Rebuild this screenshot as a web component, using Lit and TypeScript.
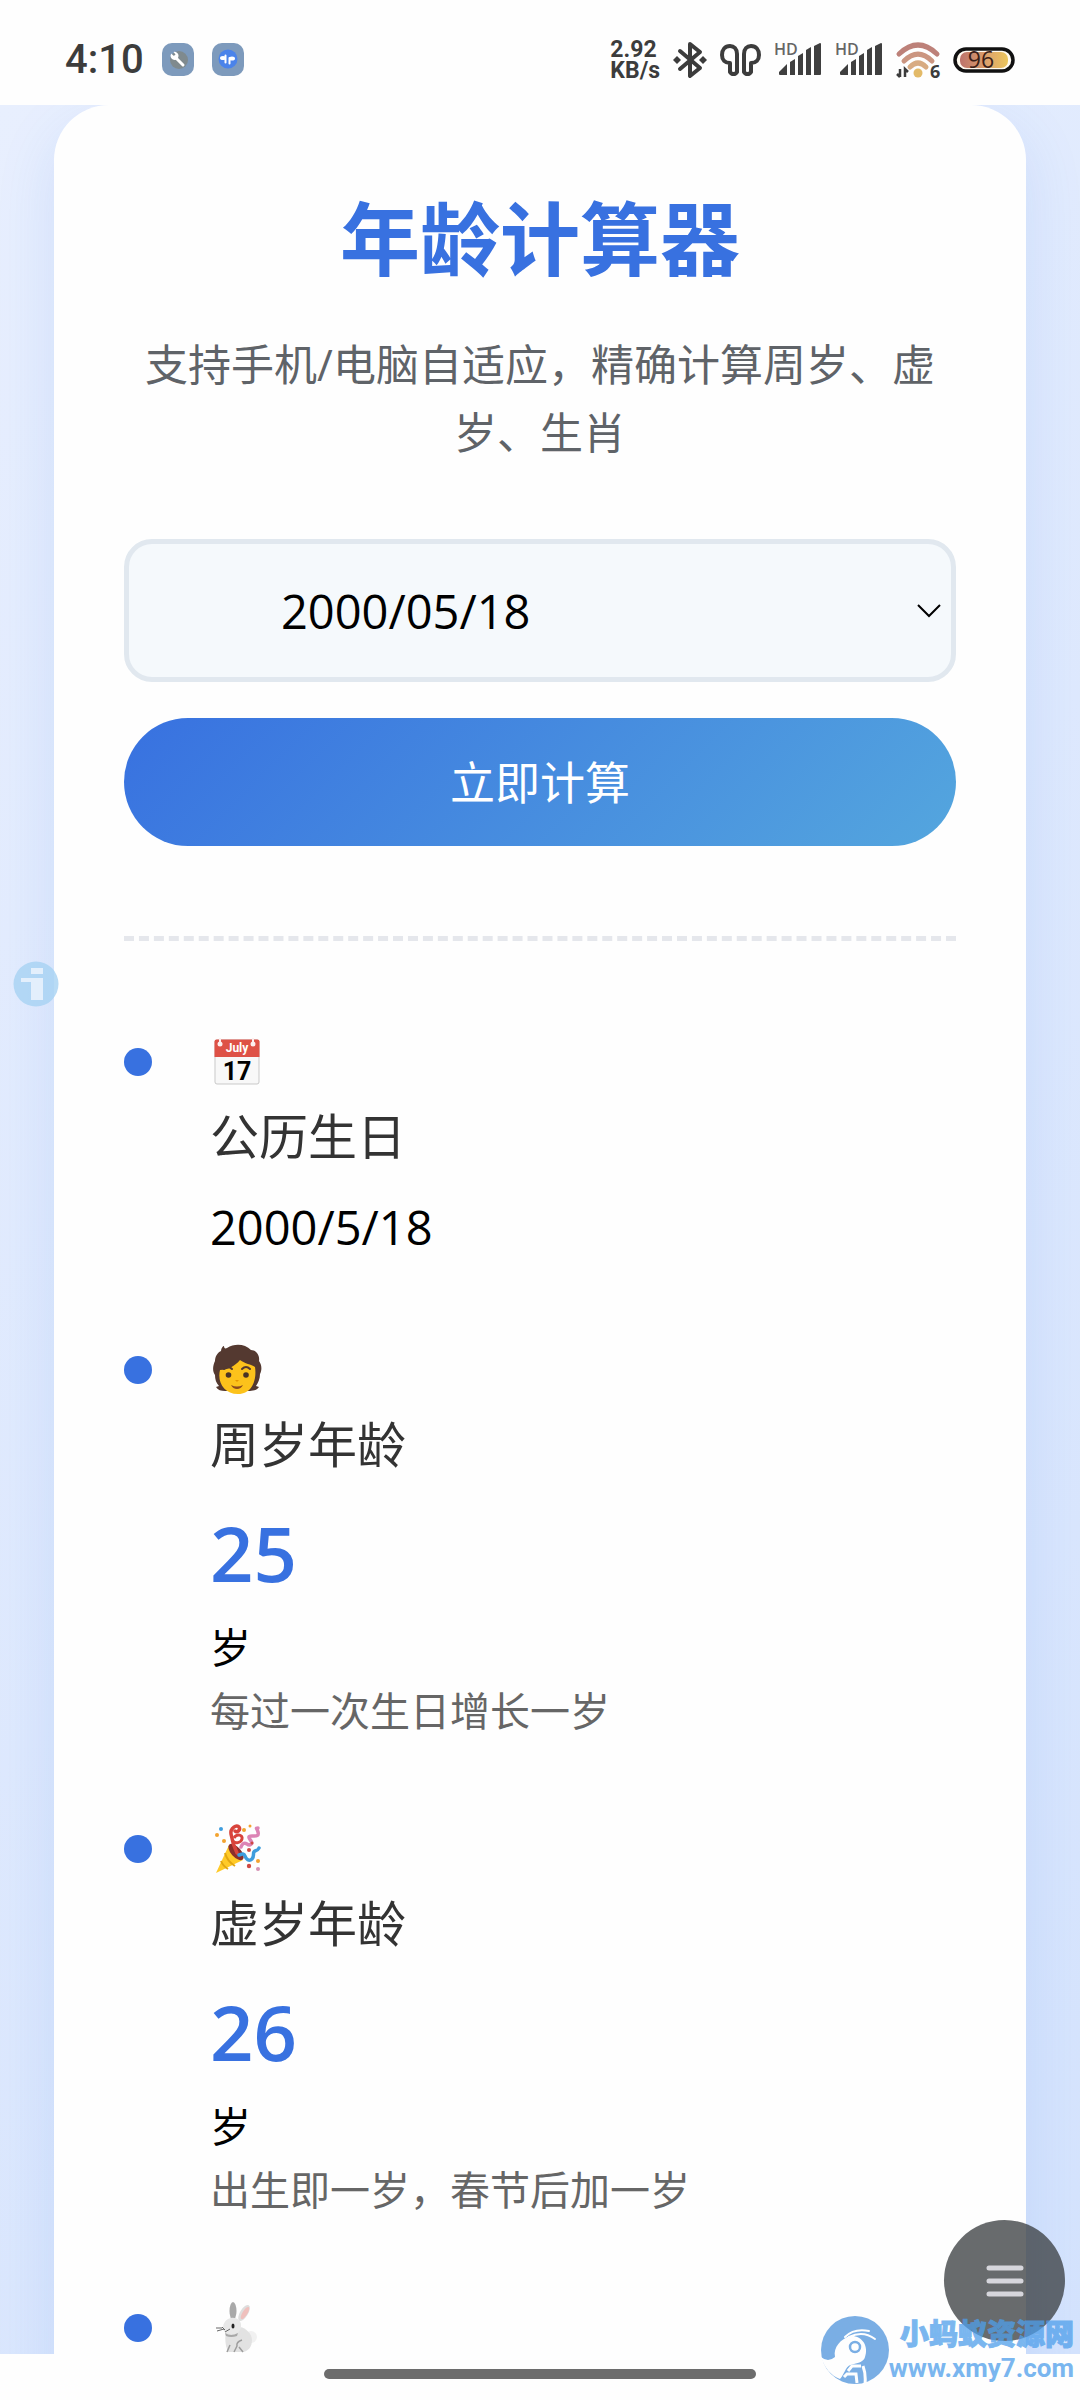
import { LitElement, html, css, svg, nothing } from "lit";
import { customElement, property } from "lit/decorators.js";

type IconName = "calendar" | "person" | "party" | "rabbit";

interface AgeEntry {
  icon: IconName;
  label: string;
  value?: string;
  age?: number;
  note?: string;
}

const ENTRIES: AgeEntry[] = [
  { icon: "calendar", label: "公历生日", value: "2000/5/18" },
  { icon: "person", label: "周岁年龄", age: 25, note: "每过一次生日增长一岁" },
  { icon: "party", label: "虚岁年龄", age: 26, note: "出生即一岁，春节后加一岁" },
  { icon: "rabbit", label: "" },
];

const ICONS = {
  calendar: svg`
    <rect x="5" y="5" width="44" height="44" rx="2" fill="#f8f8f8" stroke="#c9c9c9"/>
    <path d="M4.500 6.500a2 2 0 0 1 2-2h41a2 2 0 0 1 2 2v15.500h-45z" fill="#de5146"/>
    <g fill="#fdeeee"><circle cx="10" cy="9" r="2.500"/><rect x="9" y="3" width="2" height="6"/>
    <circle cx="43" cy="9" r="2.500"/><rect x="42" y="3" width="2" height="6"/></g>
    <text x="27" y="17" text-anchor="middle" font-family="Roboto" font-weight="700" font-size="12" fill="#fff">July</text>
    <text x="27" y="45" text-anchor="middle" font-family="Roboto" font-weight="700" font-size="25" fill="#000">17</text>`,
  person: svg`
    <path d="M11 8c0-3 2-5 3-5 0 2 1 3 3 2 8-5 18-4 24 2 5 0 9 5 8 11 3 4 3 9 1 13 0 5-2 9-4 12l3 1c-2 3-6 4-9 4H15c-4 0-7-1-9-4l3-1c-3-3-4-7-4-11-3-4-2-10 0-14 0-4 2-8 6-10z" fill="#543930"/>
    <path d="M30 17c5 4 11 4 15 7 2 13-3 27-17 27S7 39 10 27c8 0 15-4 20-10z" fill="#fcc21b"/>
    <path d="M14 26q4-4 8 0M32 26q4-4 8 0" fill="none" stroke="#543930" stroke-width="2" stroke-linecap="round"/>
    <circle cx="18.500" cy="32" r="2.800" fill="#4a3425"/><circle cx="36" cy="32" r="2.800" fill="#4a3425"/>
    <path d="M25 37h4l-2 2z" fill="#e59600"/>
    <path d="M21 42q6 3 12 0-2 4-6 4t-6-4z" fill="#8c4a1e"/>`,
  party: svg`
    <path d="M6 51 19 23 33 38z" fill="#ffca28"/>
    <path d="M15 31q2 8 10 13M11 39q2 5 7 8" fill="none" stroke="#e2a610" stroke-width="2"/>
    <ellipse cx="26" cy="30" rx="5" ry="10" transform="rotate(-42 26 30)" fill="#8a2f2b"/>
    <path d="M27 31c-3-6-5-13-6-19-1-6 6-10 8-7s-2 6-4 4" fill="none" stroke="#d8443c" stroke-width="3.500" stroke-linecap="round"/>
    <path d="M24 16c3-5 9-3 8 1s-7 5-9 2" fill="none" stroke="#d8443c" stroke-width="3"/>
    <path d="M31 25c1-3 3-5 6-3s6 0 4-3-4-5 1-5 7 0 6-4-3-4 0-4" fill="none" stroke="#dc84b5" stroke-width="3.500" stroke-linecap="round"/>
    <path d="M29 33c3-1 5-2 6 1s4 6 7 3 0-7 3-8 3-1 4-3" fill="none" stroke="#3f9ddd" stroke-width="3.500" stroke-linecap="round"/>
    <g fill="#f3a32f"><circle cx="7" cy="13" r="2"/><circle cx="14" cy="19" r="2"/><circle cx="34" cy="8" r="2"/><circle cx="40" cy="4" r="1.500"/><circle cx="48" cy="39" r="2"/></g>
    <circle cx="11" cy="7" r="2" fill="#3f9ddd"/>
    <g fill="#cf4a43"><circle cx="42" cy="21" r="1.500"/><circle cx="39" cy="28" r="2"/><circle cx="39" cy="44" r="2.200"/></g>
    <circle cx="48" cy="47" r="2" fill="#d592b4"/>`,
  rabbit: svg`
    <ellipse cx="41" cy="36" rx="6" ry="6" fill="#f1f1f1"/>
    <path d="M16 30c-1 4-1 9 0 15l2 6h15c6-1 9-6 9-12s-6-12-12-13z" fill="#e2e2e2"/>
    <ellipse cx="34" cy="12" rx="4" ry="9" transform="rotate(32 34 12)" fill="#dedede"/>
    <ellipse cx="35" cy="12" rx="2.500" ry="7" transform="rotate(32 35 12)" fill="#efc0bd"/>
    <ellipse cx="23" cy="10" rx="3.500" ry="9" fill="#a9a9a9"/>
    <path d="M21 17c7-1 11 4 10 9-1 6-6 8-11 7-6-1-7-4-7-6 0-5 3-9 8-10z" fill="#e8e8e8"/>
    <path d="M15 32q6 4 13 0l-1 3q-6 2-11 0z" fill="#a8a8a8"/>
    <ellipse cx="23" cy="25" rx="1.500" ry="2.500" fill="#222"/>
    <path d="M6 27h6M7 30l7-2M12 26l3 3M20 28l-5 3" stroke="#666" stroke-width="1"/>
    <path d="M20 44l-3 7M32 39q-6 2-5 6l-3 6M29 46l4 5" fill="none" stroke="#9d9d9d" stroke-width="1.500"/>`,
};

@customElement("status-bar")
class StatusBar extends LitElement {
  static styles = css`
    :host {
      display: flex;
      align-items: center;
      justify-content: space-between;
      box-sizing: border-box;
      height: 105px;
      padding: 14px 65px 0;
      background: #fefefe;
      color: #3c3c3c;
      font-family: Roboto, "Noto Sans CJK SC", sans-serif;
    }
    .group { display: flex; align-items: center; gap: 18px; }
    .system { gap: 13px; }
    .time { font-size: 40px; line-height: 48px; font-weight: 500; }
    .speed { font-size: 23px; line-height: 21px; font-weight: 700; }
    svg { display: block; flex: none; overflow: visible; }
  `;

  private signal() {
    return html`<svg width="48" height="38" viewBox="0 0 48 38" aria-label="HD signal">
      <text x="0" y="14" font-family="Open Sans" font-size="16" font-weight="600" fill="#666">HD</text>
      <g fill="#3f3f3f">
        <path d="M5 31l8-8v11H6q-1 0-1-1z" /><path d="M16 21l5-3v16h-5z" /><path d="M24 15l5-3v22h-5z" />
        <path d="M32 9l5-3v28h-5z" /><path d="M40 5l6-3q1 0 1 1v30q0 1-1 1h-6z" />
      </g>
    </svg>`;
  }

  render() {
    return html`
      <div class="group">
        <span class="time">4:10</span>
        <svg width="32" height="33" viewBox="0 0 32 33">
          <rect width="32" height="33" rx="10" fill="#7d9abc" />
          <circle cx="17" cy="17" r="9" fill="#7f8a8e" />
          <path d="M13 14l8 8" stroke="#fff" stroke-width="3" stroke-linecap="round" />
          <path d="M9 10.500l3 2.500 1.500-1.500-2-2.500a4 4 0 1 1-2.500 2z" fill="#fff" />
        </svg>
        <svg width="32" height="33" viewBox="0 0 32 33">
          <rect width="32" height="33" rx="10" fill="#7d9abc" />
          <circle cx="16" cy="16" r="9.500" fill="#4a83ea" />
          <path d="M13.500 19.500V12.500M17.500 20.500V15" fill="none" stroke="#fff" stroke-width="2" stroke-linecap="round" />
          <ellipse cx="11" cy="15" rx="3" ry="2" fill="#fff" />
          <ellipse cx="20" cy="15.500" rx="3" ry="2" fill="#fff" />
        </svg>
      </div>
      <div class="group system">
        <div class="speed">2.92<br />KB/s</div>
        <svg width="34" height="38" viewBox="0 0 34 38" aria-label="Bluetooth">
          <path d="M7 10l20 17-10 8V3l10 8L7 28" fill="none" stroke="#3c3c3c" stroke-width="4" stroke-linejoin="round" stroke-linecap="round" />
          <path d="M4 15l4 4-4 4-4-4zM30 15l4 4-4 4-4-4z" fill="#3c3c3c" />
        </svg>
        <svg width="41" height="38" viewBox="0 0 41 38" aria-label="Earbuds">
          <g fill="none" stroke="#3c3c3c" stroke-width="4" stroke-linejoin="round">
            <path d="M17 13v18a4 4 0 0 1-7 0V22c-5 0-8-3-8-8 0-5 3-9 8-9 4 0 7 3 7 8z" />
            <path d="M24 13v18a4 4 0 0 0 7 0V22c5 0 8-3 8-8 0-5-3-9-8-9-4 0-7 3-7 8z" />
          </g>
        </svg>
        ${this.signal()} ${this.signal()}
        <svg width="44" height="38" viewBox="0 0 44 38" aria-label="Wi-Fi 6">
          <g fill="none" stroke-width="5" stroke-linecap="round">
            <path d="M3 13Q22-5 41 13" stroke="#bd8179" />
            <path d="M8 20Q22 6 36 20" stroke="#cb9580" />
            <path d="M14 26Q22 18 30 26" stroke="#d8ab82" />
          </g>
          <circle cx="22" cy="32" r="4.500" fill="#e3ba68" />
          <path d="M4 28v8M4 36l-3-3M9 36v-8l3 3" fill="none" stroke="#3c3c3c" stroke-width="2.500" />
          <text x="34" y="37" font-family="Open Sans" font-size="18" font-weight="700" fill="#3c3c3c">6</text>
        </svg>
        <svg width="62" height="38" viewBox="0 0 62 38" aria-label="Battery">
          <defs><linearGradient id="b"><stop offset="0" stop-color="#bd736b" /><stop offset=".6" stop-color="#dfa56b" /><stop offset="1" stop-color="#ecc75c" /></linearGradient></defs>
          <rect x="2" y="8" width="58" height="22" rx="11" fill="#fffaf0" stroke="#111" stroke-width="3.500" />
          <rect x="7" y="11" width="48" height="16" rx="7" fill="url(#b)" />
          <text x="28" y="27" text-anchor="middle" font-family="Open Sans" font-size="23" fill="#3b2018">96</text>
        </svg>
      </div>
    `;
  }
}

@customElement("age-item")
class AgeItem extends LitElement {
  @property({ attribute: false }) entry!: AgeEntry;

  static styles = css`
    :host { display: flex; align-items: flex-start; gap: 58px; }
    .dot { flex: none; width: 28px; height: 28px; margin-top: 24px; border-radius: 50%; background: #3871e0; }
    .body { display: flex; flex-direction: column; min-width: 0; }
    .icon { display: flex; align-items: center; height: 75px; }
    .label { font-size: 49px; line-height: 74px; color: #333; margin: 0 0 14px; font-weight: 400; }
    .value { font-size: 47px; line-height: 80px; }
    .age { font-size: 76px; line-height: 116px; font-weight: 600; color: #3871e0; }
    .unit { font-size: 41px; line-height: 72px; }
    .note { font-size: 40px; line-height: 56px; color: #666; margin: 0 0 7px; }
  `;

  render() {
    const { icon, label, value, age, note } = this.entry;
    return html`
      <span class="dot"></span>
      <div class="body">
        <div class="icon"><svg width="54" height="54" viewBox="0 0 54 54" aria-hidden="true">${ICONS[icon]}</svg></div>
        ${label ? html`<h2 class="label">${label}</h2>` : nothing}
        ${value ? html`<span class="value">${value}</span>` : nothing}
        ${age ? html`<strong class="age">${age}</strong><span class="unit">岁</span>` : nothing}
        ${note ? html`<p class="note">${note}</p>` : nothing}
      </div>
    `;
  }
}

@customElement("site-mark")
class SiteMark extends LitElement {
  static styles = css`
    :host { display: flex; align-items: center; color: #4f9feb; opacity: 0.75; }
    .text { display: flex; flex-direction: column; align-items: flex-end; white-space: nowrap; }
    .name { font-size: 29px; line-height: 36px; font-weight: 900; -webkit-text-stroke: 1px #4f9feb; }
    .url { font-family: Roboto, sans-serif; font-size: 26px; line-height: 32px; font-weight: 700; }
    svg { display: block; flex: none; }
  `;

  render() {
    return html`
      <svg width="68" height="68" viewBox="0 0 68 68" aria-hidden="true">
        <circle cx="34" cy="34" r="34" fill="#4f94dc" />
        <path d="M0 41q7 6 14 0c-2-10 6-18 15-21 12-1 19 10 15 21-1 4-6 6-11 7-9 1-8 8-14 15-9-3-16-12-19-22z" fill="#fff" />
        <path d="M24 21q9-9 24-6M28 21q14-7 26 2" fill="none" stroke="#fff" stroke-width="2" stroke-linecap="round" />
        <circle cx="34" cy="31" r="5" fill="none" stroke="#4f94dc" stroke-width="2.500" />
        <path d="M27 55l4-5h9M42 50q3 8 2 18M23 61l3-3h9l1 9" fill="none" stroke="#fff" stroke-width="3" />
      </svg>
      <div class="text"><span class="name">小蚂蚁资源网</span><span class="url">www.xmy7.com</span></div>
    `;
  }
}

@customElement("app-root")
class AppRoot extends LitElement {
  static styles = css`
    :host {
      position: relative;
      display: flex;
      flex-direction: column;
      height: 100vh;
      overflow: hidden;
      background: #fefefe;
      color: #000;
      font-family: "Open Sans", "Noto Sans CJK SC", sans-serif;
    }
    .page {
      flex: 1;
      min-height: 0;
      overflow: hidden;
      padding: 0 54px;
      background: linear-gradient(135deg, #e8effe, #d4e3fd);
    }
    .card {
      box-sizing: border-box;
      min-height: calc(100% + 120px);
      padding: 76px 70px;
      border-radius: 55px;
      background: #fefefe;
      box-shadow: 0 22px 60px rgba(56, 113, 224, 0.13);
    }
    .title { margin: 0 0 36px; font-size: 80px; line-height: 114px; font-weight: 700; text-align: center; color: #3871e0; }
    .lead { margin: 0 0 72px; font-size: 43px; line-height: 68px; text-align: center; color: #5f6368; }
    .form { display: flex; flex-direction: column; gap: 36px; margin-bottom: 90px; }
    .field { display: grid; align-items: center; }
    .field > * { grid-area: 1 / 1; }
    .field svg { justify-self: end; margin-right: 15px; pointer-events: none; }
    .date {
      appearance: none;
      box-sizing: border-box;
      width: 100%;
      height: 143px;
      padding: 0 60px 0 152px;
      border: 5px solid #e1e8ef;
      border-radius: 28px;
      background: #f5f9fc;
      color: #000;
      font: inherit;
      font-size: 47px;
    }
    .submit {
      height: 128px;
      padding: 0 0 4px;
      border: 0;
      border-radius: 64px;
      background: linear-gradient(135deg, #3871e0, #54a6de);
      color: #fff;
      font: inherit;
      font-size: 45px;
    }
    .results { display: flex; flex-direction: column; gap: 65px; padding-top: 83px; border-top: 5px dashed #e5e7ec; }
    .nav { display: flex; justify-content: center; align-items: center; box-sizing: border-box; height: 46px; padding-bottom: 6px; flex: none; }
    .handle { width: 40%; height: 10px; border-radius: 5px; background: #6c6c6c; }
    .info, .menu { position: absolute; padding: 0; border: 0; background: none; }
    .info { left: 13px; top: 961px; }
    .menu {
      right: 15px;
      bottom: 59px;
      display: flex;
      align-items: center;
      justify-content: center;
      width: 121px;
      height: 121px;
      border-radius: 50%;
      background: rgba(57, 60, 63, 0.76);
    }
    .info svg, .menu svg { display: block; }
    .mark { position: absolute; right: 6px; bottom: 16px; }
  `;

  render() {
    return html`
      <status-bar></status-bar>
      <main class="page">
        <section class="card">
          <h1 class="title">年龄计算器</h1>
          <p class="lead">支持手机/电脑自适应，精确计算周岁、虚岁、生肖</p>
          <form class="form" @submit=${(e: Event) => e.preventDefault()}>
            <label class="field" for="birthday">
              <select class="date" id="birthday" aria-label="公历生日"><option>2000/05/18</option></select>
              <svg width="24" height="16" viewBox="0 0 24 16" aria-hidden="true">
                <path d="M1 2l11 11L23 2" fill="none" stroke="#000" stroke-width="2" />
              </svg>
            </label>
            <button class="submit" type="submit">立即计算</button>
          </form>
          <div class="results">${ENTRIES.map((entry) => html`<age-item .entry=${entry}></age-item>`)}</div>
        </section>
      </main>
      <div class="nav"><span class="handle"></span></div>
      <button class="info" type="button" aria-label="信息">
        <svg width="46" height="46" viewBox="0 0 46 46">
          <circle cx="23" cy="23" r="22.500" fill="#a6d2f2" fill-opacity=".8" />
          <path d="M18 7h12v6H18zM8 17h22v22H18V21H8z" fill="#e3effc" />
        </svg>
      </button>
      <button class="menu" type="button" aria-label="菜单">
        <svg width="38" height="32" viewBox="0 0 38 32">
          <path d="M3 3h32M3 16h32M3 29h32" stroke="#d6d6dc" stroke-width="5" stroke-linecap="round" />
        </svg>
      </button>
      <site-mark class="mark"></site-mark>
    `;
  }
}
